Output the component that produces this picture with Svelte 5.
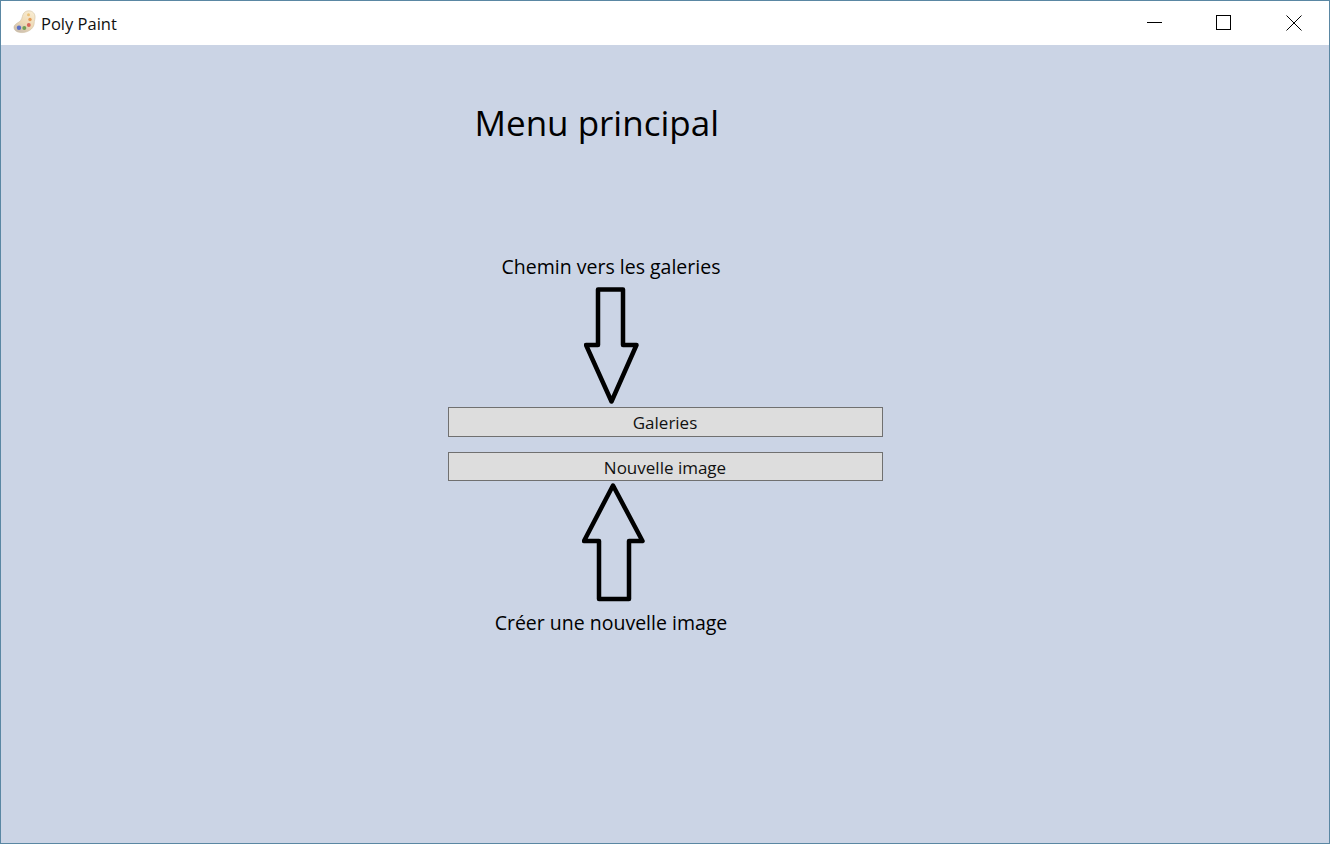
<script>
  const buttons = [
    { label: 'Galeries', tall: true },
    { label: 'Nouvelle image', tall: false }
  ];
</script>

<div class="window">
  <header class="titlebar">
    <div class="brand">
      <svg class="palette" viewBox="0 0 24 24" width="24" height="24" aria-hidden="true">
        <defs>
          <linearGradient id="wood" x1="0.75" y1="0" x2="0.2" y2="1">
            <stop offset="0" stop-color="#f8ecd2" />
            <stop offset="0.55" stop-color="#eed9b4" />
            <stop offset="1" stop-color="#c9bdb0" />
          </linearGradient>
        </defs>
        <path d="M15 .8c3.500-.4 6.500 1.800 7 5.200.4 3-.8 4.500-.8 7 0 4.500-4.500 8.800-10.500 9.500C6 23 1.500 21.500 1 18c-.4-3 2.500-4.500 5-6 3-1.800 2.800-4.500 4-7.500C10.800 2.500 12.700 1 15 .8z" fill="url(#wood)" stroke="#c9b797" stroke-width=".5" />
        <circle cx="6" cy="17.800" r="2.200" fill="#5a6fc6" />
        <circle cx="11.300" cy="18" r="2" fill="#6f9f52" />
        <circle cx="15.800" cy="15" r="1.900" fill="#d8665a" />
        <circle cx="17" cy="9.500" r="1.700" fill="#e59a55" />
        <circle cx="15.500" cy="4.800" r="1.500" fill="#ecc27a" />
      </svg>
      <span class="title">Poly Paint</span>
    </div>
    <div class="controls">
      <button class="ctl" aria-label="Réduire">
        <svg viewBox="0 0 16 16" width="16" height="16"><path d="M1 7.500H16" /></svg>
      </button>
      <button class="ctl" aria-label="Agrandir">
        <svg viewBox="0 0 16 16" width="16" height="16"><rect x=".5" y=".5" width="14" height="14" /></svg>
      </button>
      <button class="ctl" aria-label="Fermer">
        <svg viewBox="0 0 16 16" width="16" height="16"><path d="M.5 .5L15.500 15.500M15.500 .5L.5 15.500" /></svg>
      </button>
    </div>
  </header>

  <main class="content">
    <div class="column">
      <h1>Menu principal</h1>
      <p class="note first">Chemin vers les galeries</p>
      <svg class="arrow down" viewBox="0 0 56 118" width="56" height="118" aria-hidden="true">
        <path d="M14 2.500H39V58H52.500L27.500 114.500L2 58H14Z" />
      </svg>
      <div class="actions">
        {#each buttons as b}
          <button class="action" class:tall={b.tall}>{b.label}</button>
        {/each}
      </div>
      <svg class="arrow up" viewBox="0 0 64 120" width="64" height="120" aria-hidden="true">
        <path d="M31 2.500L60.500 58H47V116H17V58H2Z" />
      </svg>
      <p class="note last">Créer une nouvelle image</p>
    </div>
  </main>
</div>

<style>
  :global(body) {
    margin: 0;
    background: #cbd4e5;
  }

  .window {
    box-sizing: border-box;
    width: 1330px;
    height: 844px;
    display: flex;
    flex-direction: column;
    border: 1px solid #5a87a3;
    font-family: "Open Sans", "Noto Sans", sans-serif;
    color: #000;
    background: #cbd4e5;
  }

  .titlebar {
    flex: none;
    height: 44px;
    display: flex;
    align-items: center;
    justify-content: space-between;
    background: #fff;
  }

  .brand {
    display: flex;
    align-items: center;
    gap: 4px;
    padding-left: 12px;
  }

  .palette {
    display: block;
    margin-top: -2px;
  }

  .title {
    font-size: 16.500px;
    color: #111;
  }

  .controls {
    display: flex;
  }

  .ctl {
    width: 70px;
    height: 44px;
    padding: 0;
    border: 0;
    background: none;
    display: flex;
    align-items: center;
    justify-content: center;
  }

  .ctl svg {
    display: block;
    fill: none;
    stroke: #000;
    stroke-width: 1;
  }

  .content {
    flex: 1;
    display: flex;
    justify-content: center;
  }

  .column {
    width: 435px;
    display: flex;
    flex-direction: column;
  }

  h1 {
    margin: 51px 0 0 27px;
    font-size: 35px;
    line-height: 54px;
    font-weight: 400;
  }

  .note {
    margin: 0;
    width: 327px;
    font-size: 19.500px;
    line-height: 24px;
    text-align: center;
  }

  .note.first {
    margin-top: 105px;
  }

  .note.last {
    margin-top: 8px;
  }

  .arrow {
    display: block;
    fill: none;
    stroke: #000;
    stroke-width: 4.500;
    stroke-linejoin: round;
  }

  .arrow.down {
    margin: 8px 0 2px 136px;
  }

  .arrow.up {
    margin: 2px 0 0 134px;
  }

  .actions {
    display: flex;
    flex-direction: column;
    gap: 15px;
  }

  .action {
    box-sizing: border-box;
    width: 435px;
    height: 29px;
    padding: 1px 0 0;
    border: 1px solid #707070;
    background: #dddddd;
    font: inherit;
    font-size: 17px;
    color: #111;
    text-align: center;
  }

  .action.tall {
    height: 30px;
  }
</style>
